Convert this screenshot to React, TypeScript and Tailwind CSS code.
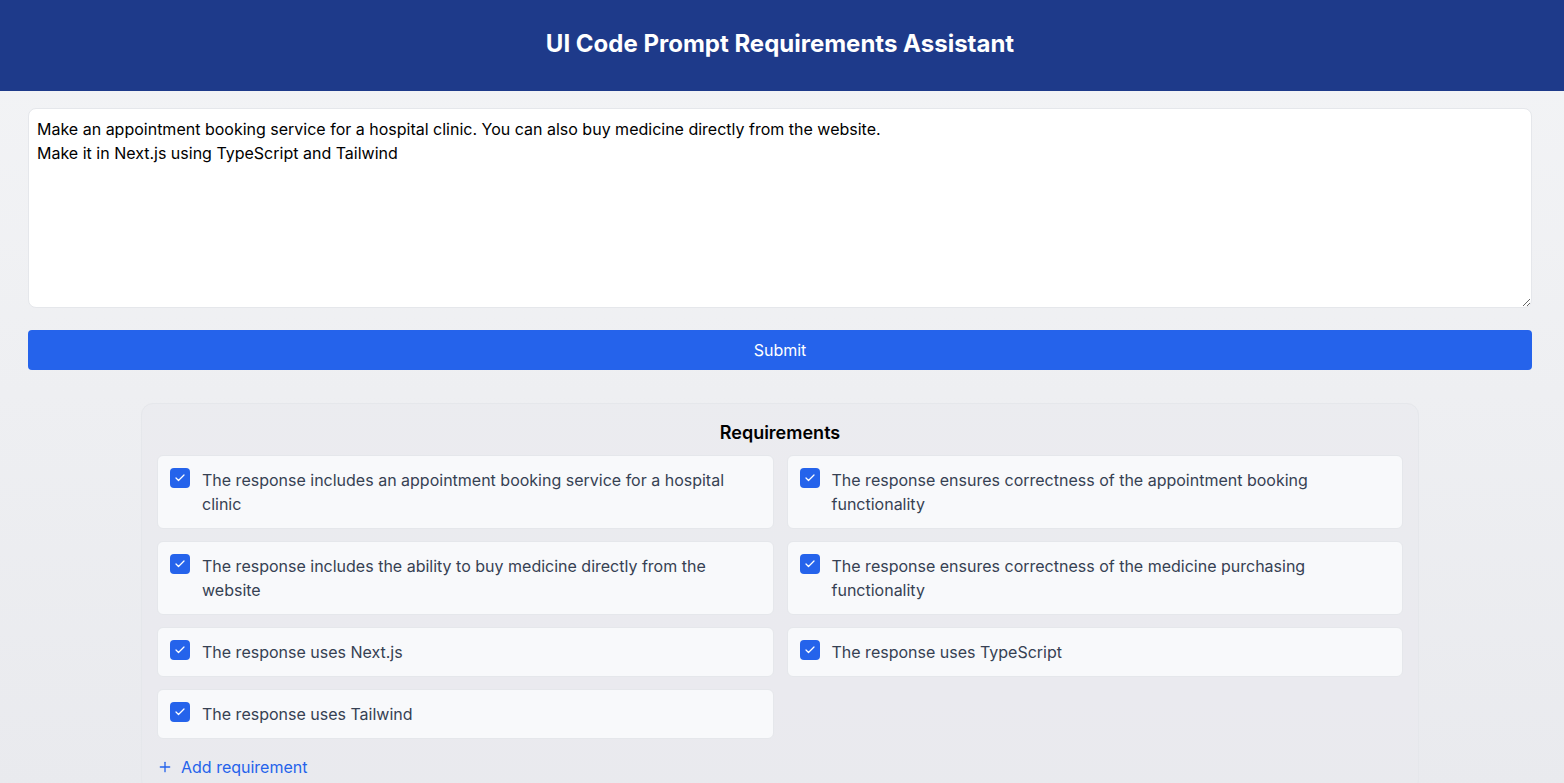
import { Plus, Check } from 'lucide-react';

export default function App() {
  const requirements = [
    'The response includes an appointment booking service for a hospital clinic',
    'The response ensures correctness of the appointment booking functionality',
    'The response includes the ability to buy medicine directly from the website',
    'The response ensures correctness of the medicine purchasing functionality',
    'The response uses Next.js',
    'The response uses TypeScript',
    'The response uses Tailwind',
  ];

  return (
    <div
      className="min-h-screen w-full bg-gradient-to-b from-[#f3f4f6] to-[#e9eaee]"
      style={{ fontFamily: 'Inter, "Noto Sans", sans-serif' }}
    >
      {/* Header */}
      <div className="bg-[#1e3a8a] h-[91px] flex items-center justify-center pb-1 pr-1">
        <h1 className="text-2xl font-bold text-white">UI Code Prompt Requirements Assistant</h1>
      </div>

      <div className="pl-7 pr-8 pt-[17px]">
        <textarea
          className="block w-full h-[200px] bg-white border border-gray-200 rounded-lg px-2 py-2 text-base leading-6 text-black outline-none"
          defaultValue={
            'Make an appointment booking service for a hospital clinic. You can also buy medicine directly from the website.\nMake it in Next.js using TypeScript and Tailwind'
          }
        />

        <button className="mt-[22px] w-full h-10 bg-[#2563eb] text-white rounded text-base">Submit</button>

        {/* Requirements */}
        <div className="mt-[33px] max-w-[1278px] mx-auto bg-[#e9eaee]/60 border border-gray-200 rounded-xl px-[15px] pt-[15px] pb-3">
          <h2 className="text-lg font-semibold text-black text-center mb-2">Requirements</h2>
          <div className="grid grid-cols-2 gap-x-[13px] gap-y-3">
            {requirements.map((req, idx) => (
              <div
                key={idx}
                className="flex items-start gap-3 bg-[#f8f9fb] border border-gray-200 rounded-md px-3 py-3"
              >
                <div className="w-5 h-5 shrink-0 rounded bg-[#2563eb] flex items-center justify-center">
                  <Check size={12} strokeWidth={2.5} className="text-white" />
                </div>
                <span className="text-base leading-6 text-gray-700">{req}</span>
              </div>
            ))}
          </div>
          <button className="mt-4 flex items-center gap-2 text-[#2563eb] text-base">
            <Plus size={16} />
            Add requirement
          </button>
        </div>
      </div>
    </div>
  );
}
